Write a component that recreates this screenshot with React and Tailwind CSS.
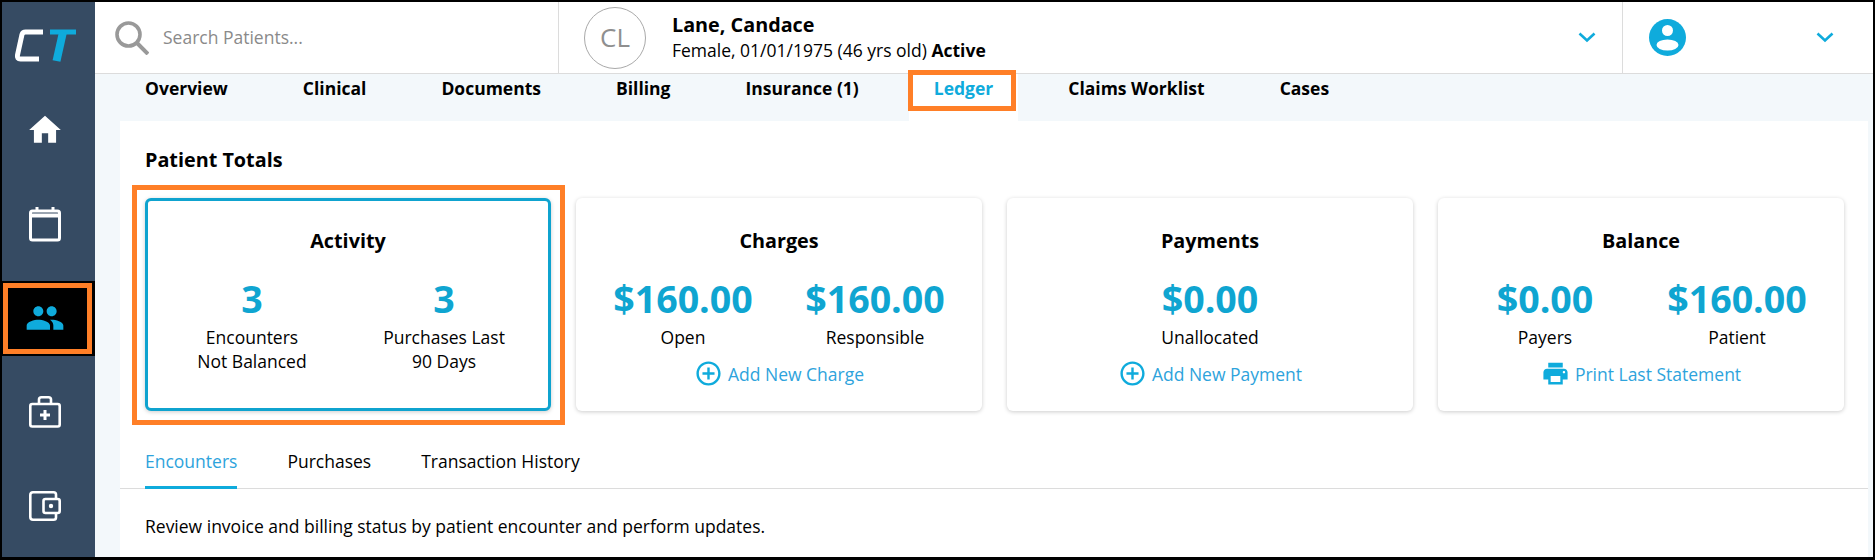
import { MdHome, MdPeople, MdAddCircleOutline, MdPrint } from 'react-icons/md'

const BLUE = 'text-[#0fabdc]'

const TABS = ['Overview', 'Clinical', 'Documents', 'Billing', 'Insurance (1)', 'Ledger', 'Claims Worklist', 'Cases']

const CARDS = [
  {
    title: 'Charges',
    stats: [
      { value: '$160.00', label: 'Open' },
      { value: '$160.00', label: 'Responsible' },
    ],
    link: 'Add New Charge',
    icon: 'add',
  },
  {
    title: 'Payments',
    stats: [{ value: '$0.00', label: 'Unallocated' }],
    link: 'Add New Payment',
    icon: 'add',
  },
  {
    title: 'Balance',
    stats: [
      { value: '$0.00', label: 'Payers' },
      { value: '$160.00', label: 'Patient' },
    ],
    link: 'Print Last Statement',
    icon: 'print',
  },
]

function Logo() {
  return (
    <svg width="64" height="34" viewBox="0 0 64 34" fill="none">
      <path d="M30 3H12.5C10.5 3 9.5 4 9 5.5L4.5 26C4 28.5 5 30 7.5 30H26" stroke="#fff" strokeWidth="5" />
      <path d="M37 3H63" stroke="#0fabdc" strokeWidth="5" />
      <path d="M50 3L43.5 32" stroke="#0fabdc" strokeWidth="8" />
    </svg>
  )
}

function CalendarIcon() {
  return (
    <svg width="32" height="36" viewBox="0 0 32 36" fill="none" stroke="#fff" strokeWidth="3">
      <rect x="1.5" y="5" width="29" height="29" rx="2" />
      <path d="M1.5 9.5h29" strokeWidth="4" />
      <path d="M8 1v5M24 1v5" />
    </svg>
  )
}

function CaseIcon() {
  return (
    <svg width="32" height="32" viewBox="0 0 32 32" fill="none" stroke="#fff" strokeWidth="2.6">
      <rect x="1.3" y="8" width="29.4" height="22.5" rx="2" />
      <path d="M10 8V3.5C10 2 11 1.3 12.5 1.3h7C21 1.3 22 2 22 3.5V8" />
      <path d="M16 14v10M11 19h10" strokeWidth="3" />
    </svg>
  )
}

function WalletIcon() {
  return (
    <svg width="32" height="30" viewBox="0 0 32 30" fill="none" stroke="#fff" strokeWidth="2.6">
      <path d="M27 8V3.5C27 2 26 1.3 24.5 1.3H4C2.3 1.3 1.3 2.3 1.3 4v22c0 1.7 1 2.7 2.7 2.7h20.5c1.5 0 2.5-.7 2.5-2.2V22" />
      <rect x="14.5" y="8" width="16.2" height="14" rx="2" />
      <circle cx="22" cy="15" r="2.2" fill="#fff" stroke="none" />
    </svg>
  )
}

function SearchIcon() {
  return (
    <svg width="34" height="34" viewBox="0 0 34 34" fill="none" stroke="#999" strokeWidth="3.6">
      <circle cx="13.5" cy="13.5" r="11.5" />
      <path d="M21.5 21.5L33 33" strokeWidth="4" />
    </svg>
  )
}

function Chevron() {
  return (
    <svg width="18" height="11" viewBox="0 0 18 11" fill="none" stroke="#0fabdc" strokeWidth="2.6">
      <path d="M1.5 1.5L9 8.5L16.5 1.5" />
    </svg>
  )
}

function UserIcon() {
  return (
    <svg width="37" height="37" viewBox="0 0 37 37">
      <circle cx="18.5" cy="18.5" r="18.5" fill="#0fabdc" />
      <circle cx="18.5" cy="11.5" r="5.5" fill="#fff" />
      <ellipse cx="18.5" cy="26" rx="11" ry="5.5" fill="#fff" />
    </svg>
  )
}

function SideItem({ children, active }) {
  return (
    <div className="h-[94px] flex items-center justify-center">
      {active ? (
        <div className="relative w-full h-[75px] bg-black flex items-center justify-center pr-[7px]">
          {children}
          <div className="absolute left-[1px] right-[3px] top-[2px] bottom-[2px] border-[5px] border-[#ff7f27]" />
        </div>
      ) : (
        <div className="pr-[7px] flex">{children}</div>
      )}
    </div>
  )
}

function Stat({ value, label }) {
  return (
    <div className="text-center">
      <div className="text-[37.6px] leading-[52px] font-bold text-[#0fa5d1]">{value}</div>
      <div className="text-[17.5px] leading-6 text-black">{label}</div>
    </div>
  )
}

function TotalCard({ card }) {
  const Icon = card.icon === 'print' ? MdPrint : MdAddCircleOutline
  return (
    <div className="w-[406px] h-[213px] rounded-md bg-white shadow-[0_1px_4px_rgba(0,0,0,0.2)] pt-[30px] px-[11px]">
      <h3 className="text-[19.8px] leading-[26px] font-bold text-center text-black">{card.title}</h3>
      <div className={`mt-[19px] grid ${card.stats.length > 1 ? 'grid-cols-2' : 'grid-cols-1'}`}>
        {card.stats.map((s, idx) => (
          <Stat key={idx} value={s.value} label={s.label} />
        ))}
      </div>
      <div className="mt-[10px] flex items-center justify-center gap-[5px] text-[17.5px] leading-6 text-[#2ea3dc]">
        <Icon className={`text-[29px] ${BLUE}`} />
        <span>{card.link}</span>
      </div>
    </div>
  )
}

export default function App() {
  return (
    <div className="w-[1875px] h-[560px] bg-black pt-[2px] pl-[2px] pr-[2px] pb-[3px] font-['Open_Sans',sans-serif] overflow-hidden">
      <div className="h-full flex bg-[#f3f8fb]">
        <aside className="w-[93px] shrink-0 bg-[#364b63] flex flex-col">
          <div className="h-[81px] flex items-center justify-center pt-[6px] pr-[7px]">
            <Logo />
          </div>
          <SideItem><MdHome className="text-[38px] text-white" /></SideItem>
          <SideItem><CalendarIcon /></SideItem>
          <SideItem active><MdPeople className={`text-[40px] ${BLUE}`} /></SideItem>
          <SideItem><CaseIcon /></SideItem>
          <SideItem><WalletIcon /></SideItem>
        </aside>

        <div className="flex-1 min-w-0 flex flex-col">
          <header className="h-[72px] shrink-0 bg-white border-b border-[#dcdcdc] flex items-center">
            <div className="w-[464px] h-full flex items-center border-r border-[#dcdcdc] pl-[20px] gap-[14px]">
              <SearchIcon />
              <span className="text-[17.5px] text-[#8a8a8a]">Search Patients...</span>
            </div>
            <div className="flex-1 h-full flex items-center pl-[25px] border-r border-[#dcdcdc]">
              <div className="w-[62px] h-[62px] rounded-full border border-[#a9a9a9] flex items-center justify-center text-[26px] text-[#8f8f8f]">
                CL
              </div>
              <div className="ml-[26px]">
                <div className="text-[19.8px] leading-6 font-bold text-black">Lane, Candace</div>
                <div className="text-[17.5px] leading-[26px] text-black">
                  Female, 01/01/1975 (46 yrs old) <span className="font-bold">Active</span>
                </div>
              </div>
              <div className="ml-auto mr-[26px]"><Chevron /></div>
            </div>
            <div className="w-[250px] h-full flex items-center pl-[26px] pr-[39px] justify-between">
              <UserIcon />
              <Chevron />
            </div>
          </header>

          <nav className="h-[47px] shrink-0 flex pl-[25px] gap-[25px] relative">
            {TABS.map((tab) => (
              <div
                key={tab}
                className={`relative px-[25px] pt-[2px] text-[17.5px] leading-[24px] font-bold ${
                  tab === 'Ledger' ? `bg-white ${BLUE}` : 'text-black'
                }`}
              >
                {tab}
                {tab === 'Ledger' && (
                  <div className="absolute left-[-1px] right-[2px] top-[-4px] h-[41px] border-[5px] border-[#ff7f27]" />
                )}
              </div>
            ))}
          </nav>

          <main className="flex-1 bg-white ml-[25px] mr-[5px] min-h-0">
            <h2 className="pl-[25px] pt-[26px] text-[19.8px] leading-[26px] font-bold text-black">Patient Totals</h2>
            <div className="mt-[25px] pl-[25px] pr-[24px] flex gap-[25px]">
              <div className="relative w-[406px] h-[213px] rounded-md bg-white border-[3px] border-[#0fa3cf] shadow-[0_1px_4px_rgba(0,0,0,0.2)] pt-[27px] px-[8px]">
                <h3 className="text-[19.8px] leading-[26px] font-bold text-center text-black">Activity</h3>
                <div className="mt-[19px] grid grid-cols-2">
                  <Stat value="3" label={<>Encounters<br />Not Balanced</>} />
                  <Stat value="3" label={<>Purchases Last<br />90 Days</>} />
                </div>
                <div className="absolute left-[-16px] right-[-17px] top-[-16px] bottom-[-17px] border-[5px] border-[#ff7f27]" />
              </div>
              {CARDS.map((card) => (
                <TotalCard key={card.title} card={card} />
              ))}
            </div>

            <div className="mt-[26px] h-[52px] border-b border-[#dcdcdc] flex pl-[25px] gap-[50px] text-[17.5px] leading-6 text-black">
              <div className="h-[52px] pt-[12px] border-b-[3px] border-[#0fabdc] text-[#2ea3dc]">Encounters</div>
              <div className="pt-[12px]">Purchases</div>
              <div className="pt-[12px]">Transaction History</div>
            </div>
            <p className="pl-[25px] pt-[25px] text-[17.5px] leading-6 text-black">
              Review invoice and billing status by patient encounter and perform updates.
            </p>
          </main>
        </div>
      </div>
    </div>
  )
}
